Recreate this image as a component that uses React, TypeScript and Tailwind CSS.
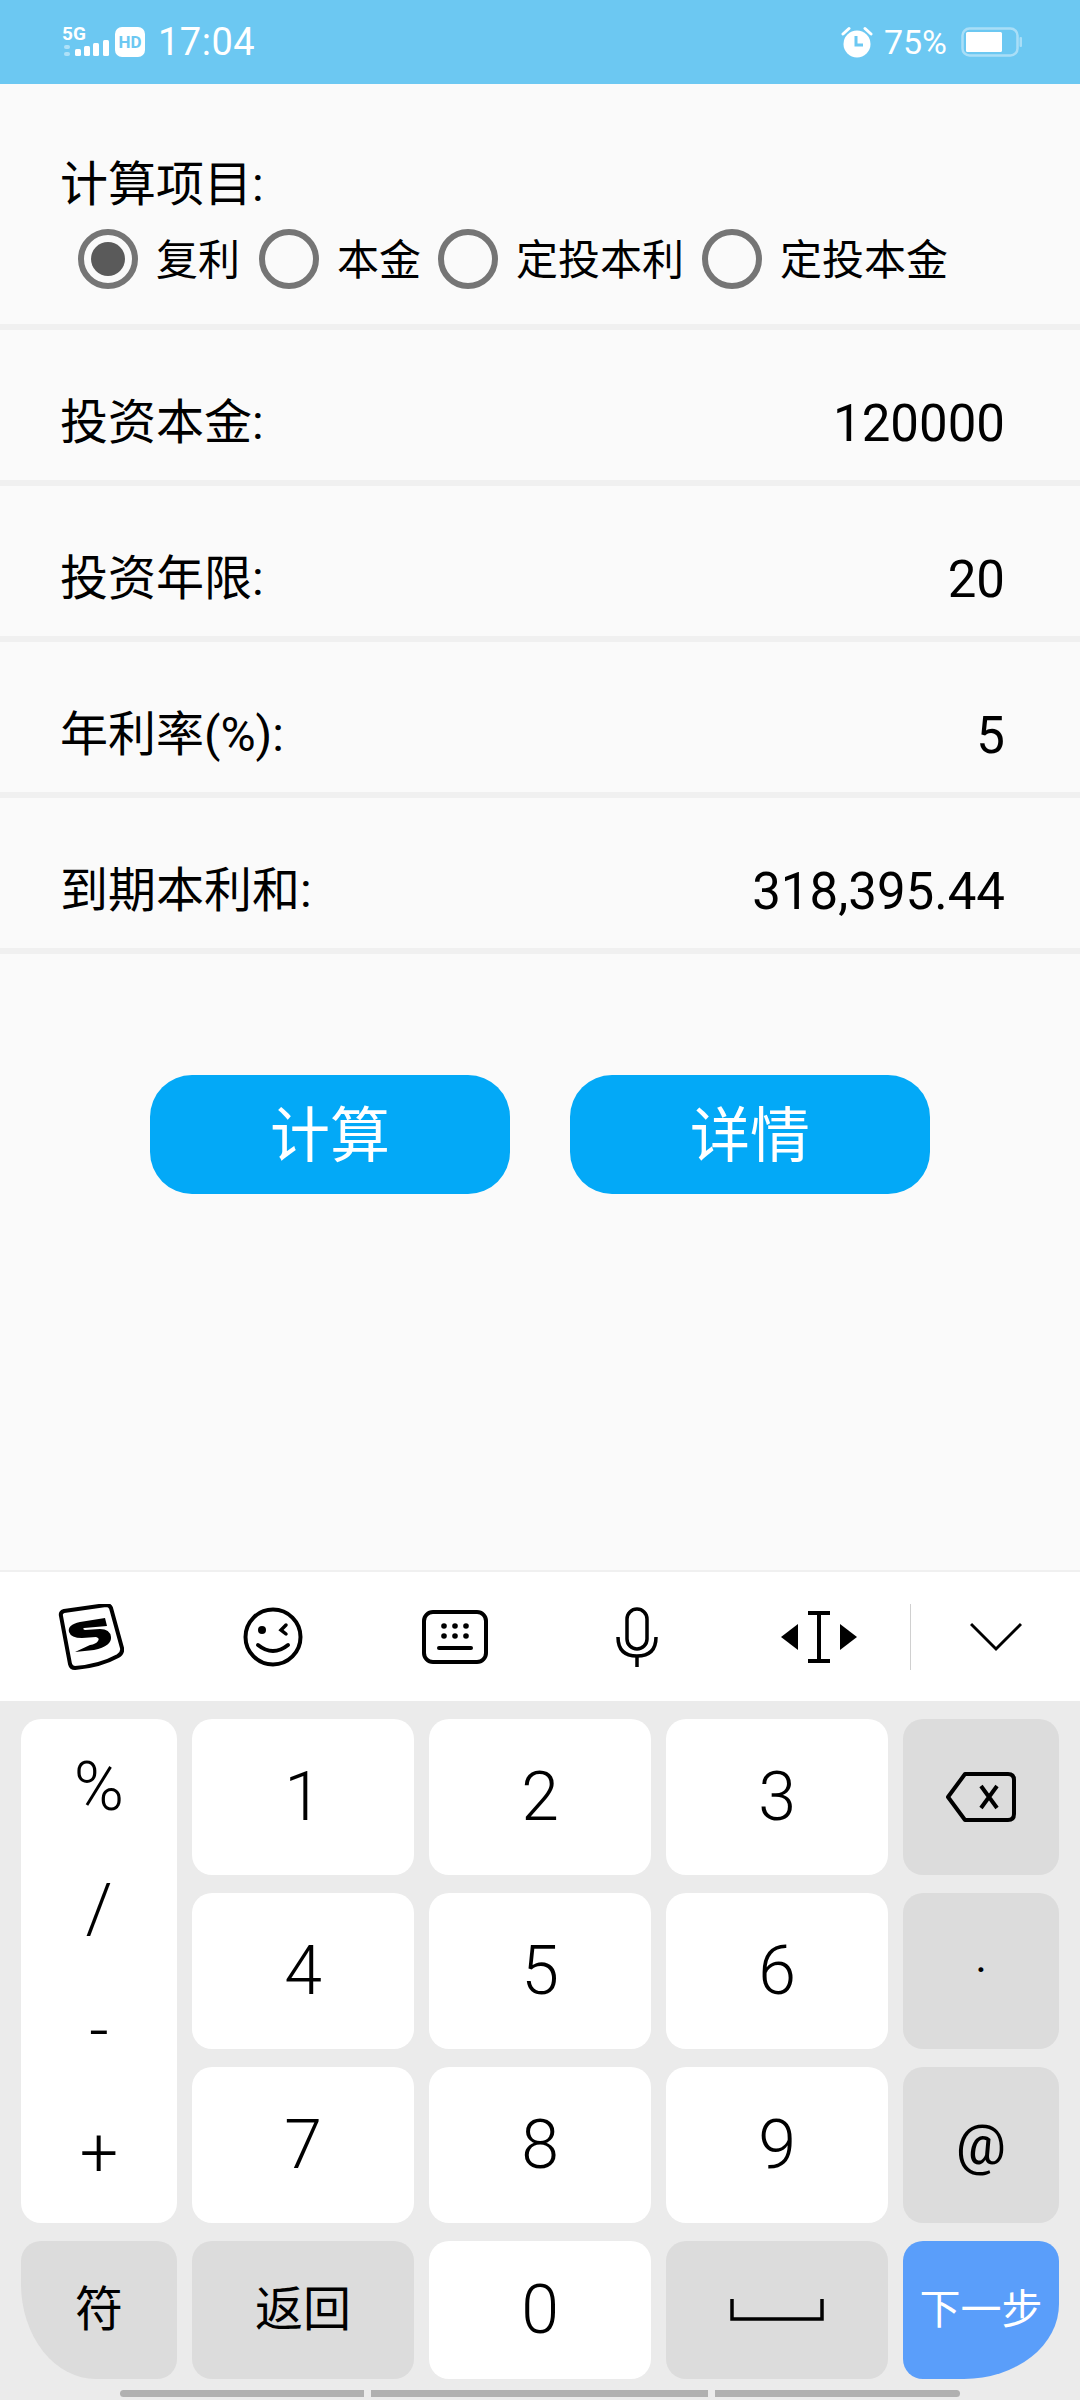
const cjk = "font-['Roboto','Noto_Sans_CJK_SC',sans-serif]";

const Radio = ({ label, checked, w }: { label: string; checked?: boolean; w: string }) => (
    <div className={`flex items-center ${w}`}>
        <div className="flex h-[60px] w-[60px] shrink-0 items-center justify-center rounded-full border-[6px] border-[#757575]">
            {checked && <div className="h-[34px] w-[34px] rounded-full bg-[#5a5a5a]" />}
        </div>
        <span className="ml-[18px] mt-[3px] text-[42px] leading-none text-black">{label}</span>
    </div>
);

const Row = ({ label, value }: { label: string; value: string }) => (
    <div className="flex h-[156px] items-center justify-between border-b-[6px] border-[#f0f0f0] pl-[60px] pr-[75px] pt-[36px]">
        <span className="text-[48px] leading-none text-black">{label}</span>
        <span className="text-[51px] leading-none text-black">{value}</span>
    </div>
);

const Key = ({ children, dark, className }: { children: React.ReactNode; dark?: boolean; className?: string }) => (
    <div className={`flex items-center justify-center rounded-[20px] text-black ${dark ? "bg-[#dcdcdc]" : "bg-white"} ${className ?? ""}`}>
        {children}
    </div>
);

const StatusBar = () => (
    <div className="flex h-[84px] shrink-0 items-center justify-between bg-[#6cc8f2] pl-[62px] pr-[58px] text-white">
        <div className="flex items-center">
            <svg width="50" height="40" viewBox="0 0 50 40" fill="white">
                <text x="0" y="18" fontSize="19" fontWeight="700" fontFamily="Roboto">5G</text>
                <rect x="13" y="27" width="6" height="7" rx="1.5" />
                <rect x="22" y="24" width="6" height="10" rx="1.5" />
                <rect x="31" y="21" width="6" height="13" rx="1.5" />
                <rect x="41" y="18" width="6" height="16" rx="1.5" />
                <rect x="2" y="23" width="6" height="4" rx="2" opacity="0.45" />
                <rect x="2" y="30" width="6" height="4" rx="2" opacity="0.45" />
            </svg>
            <div className="ml-[3px] flex h-[30px] w-[30px] items-center justify-center rounded-[7px] bg-white text-[17px] font-bold leading-none text-[#6cc8f2]">
                HD
            </div>
            <span className="ml-[13px] text-[38px] leading-none tracking-[0.5px]">17:04</span>
        </div>
        <div className="flex items-center">
            <svg width="32" height="32" viewBox="0 0 32 32" fill="white">
                <circle cx="16" cy="18" r="13.5" />
                <path d="M2 8 L8 2.5" stroke="white" strokeWidth="3" strokeLinecap="round" />
                <path d="M30 8 L24 2.5" stroke="white" strokeWidth="3" strokeLinecap="round" />
                <path d="M15 10 V19 H22" fill="none" stroke="#6cc8f2" strokeWidth="3" />
            </svg>
            <span className="ml-[11px] text-[34px] leading-none">75%</span>
            <svg className="ml-[14px]" width="61" height="30" viewBox="0 0 61 30">
                <rect x="1.5" y="1.5" width="55" height="27" rx="7" fill="none" stroke="#a9def7" strokeWidth="2.5" />
                <rect x="5" y="5" width="36" height="20" rx="1.5" fill="white" />
                <rect x="58.5" y="10" width="2.5" height="10" rx="1" fill="#a9def7" />
            </svg>
        </div>
    </div>
);

const Toolbar = () => (
    <div className="flex h-[131px] shrink-0 items-center border-t-2 border-[#f0f0f0] bg-white">
        <div className="flex w-[182px] justify-center">
            <svg width="66" height="66" viewBox="0 0 66 66">
                <path d="M3 12 Q2 8 6 7 L48 1 Q52 1 53 4 L64 44 Q65 49 60 52 Q42 62 17 64 Q13 64 12 60 Z" fill="none" stroke="black" strokeWidth="4" strokeLinejoin="round" />
                <path d="M47 14 L22 18 Q9 21 11 28 Q13 34 24 34 L38 33 Q42 34 40 37 Q38 40 32 41 L17 48 L36 46 Q54 42 53 33 Q52 25 42 25 L27 26 Q24 25 26 24 L49 22 Z" fill="black" />
            </svg>
        </div>
        <div className="flex w-[182px] justify-center">
            <svg width="60" height="60" viewBox="0 0 60 60" fill="none" stroke="black" strokeWidth="4">
                <circle cx="30" cy="30" r="27.5" />
                <circle cx="19" cy="23" r="4" fill="black" stroke="none" />
                <path d="M43 18 L38 23 L43 27" strokeWidth="3.5" strokeLinecap="round" />
                <path d="M15 38 Q30 50 45 38" strokeWidth="4" strokeLinecap="round" />
            </svg>
        </div>
        <div className="flex w-[182px] justify-center">
            <svg width="66" height="54" viewBox="0 0 66 54" fill="black">
                <rect x="2" y="2" width="62" height="50" rx="9" fill="none" stroke="black" strokeWidth="4" />
                <circle cx="22" cy="16" r="2.8" />
                <circle cx="33" cy="16" r="2.8" />
                <circle cx="44" cy="16" r="2.8" />
                <circle cx="22" cy="26" r="2.8" />
                <circle cx="33" cy="26" r="2.8" />
                <circle cx="44" cy="26" r="2.8" />
                <rect x="15" y="36" width="36" height="4" rx="2" />
            </svg>
        </div>
        <div className="flex w-[182px] justify-center">
            <svg width="42" height="60" viewBox="0 0 42 60" fill="none" stroke="black" strokeWidth="3.5">
                <rect x="11" y="2" width="20" height="40" rx="10" />
                <path d="M2 30 Q2 49 21 49 Q40 49 40 30" />
                <path d="M21 49 V60" />
            </svg>
        </div>
        <div className="flex w-[182px] justify-center">
            <svg width="78" height="54" viewBox="0 0 78 54" fill="black">
                <path d="M18 14 V40 L1 27 Z" />
                <path d="M60 14 V40 L77 27 Z" />
                <path d="M28 3 H50 M39 3 V51 M28 51 H50" fill="none" stroke="black" strokeWidth="4" />
            </svg>
        </div>
        <div className="h-[66px] w-[1px] bg-[#d0d0d0]" />
        <div className="flex flex-1 justify-center">
            <svg width="52" height="30" viewBox="0 0 52 30" fill="none" stroke="black" strokeWidth="3">
                <path d="M1 2 L26 27 L51 2" />
            </svg>
        </div>
    </div>
);

const Keyboard = () => (
    <div className="grid shrink-0 grid-cols-[156px_222px_222px_222px_156px] grid-rows-[156px_156px_156px_138px] gap-x-[15px] gap-y-[18px] bg-[#ebebeb] pl-[21px] pt-[18px] text-[68px] font-[350] leading-none">
        <div className="row-span-3 flex flex-col justify-around rounded-[20px] bg-white pb-[9px] pt-[7px] text-center">
            <span>%</span>
            <span>/</span>
            <span>-</span>
            <span>+</span>
        </div>
        <Key>1</Key>
        <Key>2</Key>
        <Key>3</Key>
        <Key dark>
            <svg width="70" height="50" viewBox="0 0 70 50" fill="none" stroke="black" strokeWidth="4">
                <path d="M19 2 H62 Q68 2 68 8 V42 Q68 48 62 48 H19 L2 25 Z" strokeLinejoin="round" />
                <path d="M35 14 L51 36 M51 14 L35 36" />
            </svg>
        </Key>
        <Key>4</Key>
        <Key>5</Key>
        <Key>6</Key>
        <Key dark>
            <span className="text-[44px] font-normal">·</span>
        </Key>
        <Key>7</Key>
        <Key>8</Key>
        <Key>9</Key>
        <Key dark>
            <span className="text-[56px] font-normal">@</span>
        </Key>
        <Key dark className="rounded-bl-[75px_95px] text-[48px] font-normal">符</Key>
        <Key dark className="text-[48px] font-normal">返回</Key>
        <Key>0</Key>
        <Key dark>
            <svg width="94" height="24" viewBox="0 0 94 24" fill="none" stroke="black" strokeWidth="3.5">
                <path d="M2 1 V21 H92 V1" />
            </svg>
        </Key>
        <Key className="rounded-br-[95px_75px] !bg-[#5a9efa] text-[41px] font-normal !text-white">下一步</Key>
    </div>
);

const App = () => (
    <div className={`flex h-[2400px] w-[1080px] flex-col overflow-hidden bg-[#fafafa] ${cjk}`}>
        <StatusBar />
        <div className="h-[246px] shrink-0 border-b-[6px] border-[#f0f0f0] pt-[77px]">
            <div className="pl-[60px] text-[48px] leading-none text-black">计算项目:</div>
            <div className="mt-[20px] flex pl-[78px]">
                <Radio label="复利" checked w="w-[181px]" />
                <Radio label="本金" w="w-[179px]" />
                <Radio label="定投本利" w="w-[264px]" />
                <Radio label="定投本金" w="w-[260px]" />
            </div>
        </div>
        <Row label="投资本金:" value="120000" />
        <Row label="投资年限:" value="20" />
        <Row label="年利率(%):" value="5" />
        <Row label="到期本利和:" value="318,395.44" />
        <div className="mt-[121px] flex justify-center gap-[60px]">
            <div className="flex h-[119px] w-[360px] items-center justify-center rounded-[42px] bg-[#03a9f7] pt-[5px] text-[60px] leading-none text-white">计算</div>
            <div className="flex h-[119px] w-[360px] items-center justify-center rounded-[42px] bg-[#03a9f7] pt-[5px] text-[60px] leading-none text-white">详情</div>
        </div>
        <div className="flex-1" />
        <Toolbar />
        <Keyboard />
        <div className="flex h-[21px] shrink-0 items-start justify-center gap-[7px] bg-[#ebebeb] pt-[11px]">
            <div className="h-[7px] w-[244px] rounded-l-full bg-[#b0b0b0]" />
            <div className="h-[7px] w-[337px] bg-[#b0b0b0]" />
            <div className="h-[7px] w-[245px] rounded-r-full bg-[#b0b0b0]" />
        </div>
    </div>
);

export default App;
